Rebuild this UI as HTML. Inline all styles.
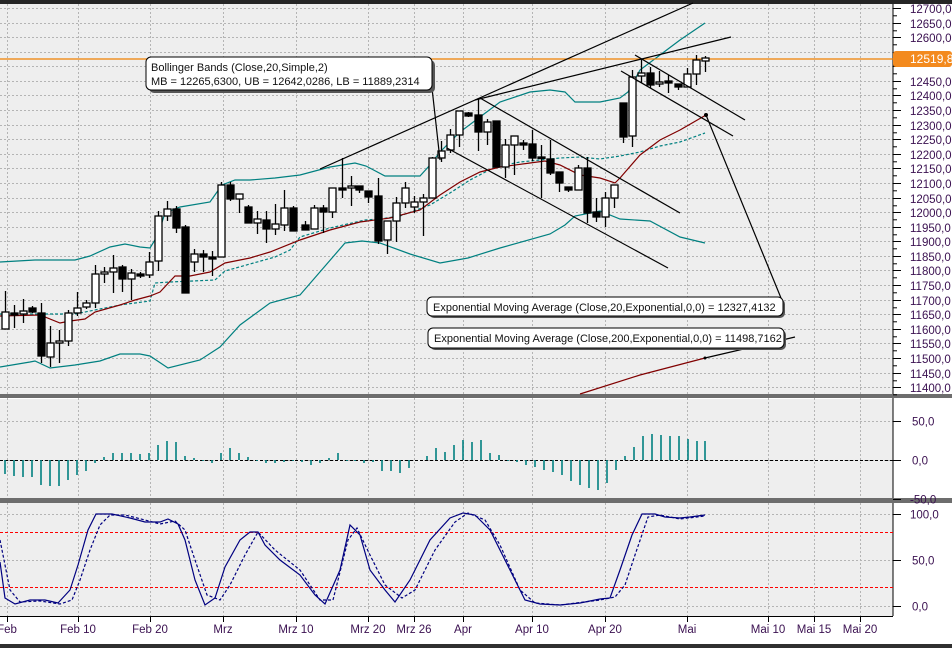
<!DOCTYPE html>
<html><head><meta charset="utf-8"><style>
html,body{margin:0;padding:0;background:#fff;width:952px;height:648px;overflow:hidden}
svg{display:block;font-family:"Liberation Sans",Arial,sans-serif}
</style></head><body>
<svg id="s" width="952" height="648" xmlns="http://www.w3.org/2000/svg">
<rect width="952" height="648" fill="#fff"/>
<rect x="0" y="0" width="893" height="394" fill="#eeeeee"/>
<rect x="0" y="399" width="893" height="99" fill="#eeeeee"/>
<rect x="0" y="503" width="893" height="113" fill="#eeeeee"/>
<g id="grid" stroke="#b4b4b4" stroke-width="1" stroke-dasharray="2,2"></g>
<rect x="0" y="0" width="952" height="4" fill="#252525"/>
<rect x="0" y="394" width="952" height="4" fill="#6d6d6d"/>
<rect x="0" y="498" width="952" height="5" fill="#6d6d6d"/>
<rect x="0" y="644" width="952" height="4" fill="#303030"/>
<line x1="893" y1="4" x2="893" y2="394" stroke="#000"/>
<line x1="893" y1="398" x2="893" y2="498" stroke="#000"/>
<line x1="893" y1="503" x2="893" y2="616" stroke="#000"/>
<line x1="0" y1="616.5" x2="893" y2="616.5" stroke="#000"/>
<g id="ticks" stroke="#000"></g>
<g id="labels" font-size="11.5" fill="#3a1050"></g>
<g id="ind"></g>
<line x1="0" y1="59" x2="893" y2="59" stroke="#f08000" stroke-width="1.3"/>
<g id="cand" stroke="#000" stroke-width="1.3"></g>
<g id="lines" fill="none" stroke="#000" stroke-width="1.2">
<line x1="320" y1="169" x2="693" y2="3"/>
<line x1="475" y1="100" x2="731" y2="37"/>
<line x1="480" y1="98" x2="680" y2="213"/>
<line x1="447" y1="148" x2="668" y2="268"/>
<line x1="635" y1="55" x2="745" y2="120"/>
<line x1="621" y1="71" x2="733" y2="136"/>
<line x1="432" y1="88" x2="440" y2="160"/>
<line x1="706" y1="115" x2="781" y2="298"/>
<line x1="705" y1="358" x2="795" y2="337"/>
</g>
<circle cx="706" cy="115" r="2" fill="#000"/>
<circle cx="705" cy="358" r="1.5" fill="#000"/>
<g font-size="11" fill="#111">
<rect x="149" y="60" width="286" height="33" rx="5" fill="#555"/>
<rect x="146" y="57" width="286" height="33" rx="5" fill="#fff" stroke="#000"/>
<text x="151" y="71">Bollinger Bands (Close,20,Simple,2)</text>
<text x="151" y="85">MB = 12265,6300, UB = 12642,0286, LB = 11889,2314</text>
<rect x="429" y="299" width="356" height="19" rx="5" fill="#555"/>
<rect x="427" y="297" width="356" height="19" rx="5" fill="#fff" stroke="#000"/>
<text x="433" y="311">Exponential Moving Average (Close,20,Exponential,0,0) = 12327,4132</text>
<rect x="430" y="330" width="356" height="20" rx="5" fill="#555"/>
<rect x="428" y="328" width="356" height="20" rx="5" fill="#fff" stroke="#000"/>
<text x="434" y="342">Exponential Moving Average (Close,200,Exponential,0,0) = 11498,7162</text>
</g>
<rect x="893" y="51" width="59" height="16" rx="3" fill="#f38a1e"/>
<text x="910" y="63" font-size="12" fill="#fff">12519,8</text>
</svg>
<script>
var NS="http://www.w3.org/2000/svg";
function el(p,t,a,txt){var e=document.createElementNS(NS,t);for(var k in a)e.setAttribute(k,a[k]);if(txt!=null)e.textContent=txt;document.getElementById(p).appendChild(e);return e;}
var py=function(p){return 8+(12700-p)/50*14.58};
var vx=[7,78,150,223,296,368,414,463,532,605,687,768,814,860];
vx.forEach(function(x){[[4,394],[398,498],[503,616]].forEach(function(r){el("grid","line",{x1:x+.5,y1:r[0],x2:x+.5,y2:r[1]});});});
for(var p=12700;p>=11400;p-=50){var y=Math.round(py(p))+.5;el("grid","line",{x1:0,y1:y,x2:893,y2:y});
 el("ticks","line",{x1:893,y1:y,x2:901,y2:y});
 el("ticks","line",{x1:893,y1:y+7.3,x2:897,y2:y+7.3});
 if(p!=12500&&p!=12550) el("labels","text",{x:910,y:y+4.5},p+",0");}
[[421,"50,0"],[460,"0,0"],[499,"-50,0"],[514,"100,0"],[560,"50,0"],[606,"0,0"]].forEach(function(a){el("ticks","line",{x1:893,y1:a[0]+.5,x2:901,y2:a[0]+.5});el("labels","text",{x:a[1].length>4?910:912,y:a[0]+4.5},a[1]);});
[421,460,514,560,606].forEach(function(y){el("grid","line",{x1:0,y1:y+.5,x2:893,y2:y+.5});});
[[7,"Feb"],[78,"Feb 10"],[150,"Feb 20"],[223,"Mrz"],[296,"Mrz 10"],[368,"Mrz 20"],[414,"Mrz 26"],[463,"Apr"],[532,"Apr 10"],[605,"Apr 20"],[687,"Mai"],[768,"Mai 10"],[814,"Mai 15"],[860,"Mai 20"]].forEach(function(a){
 el("ticks","line",{x1:a[0]+.5,y1:616,x2:a[0]+.5,y2:622});
 el("labels","text",{x:a[0],y:633,"text-anchor":"middle","font-size":"11.5"},a[1]);});
function pl(pts,st,w,da){var a={points:pts.map(function(q){return q.join(",")}).join(" "),fill:"none",stroke:st,"stroke-width":w};if(da)a["stroke-dasharray"]=da;el("ind","polyline",a);}
pl([[0,262],[35,260],[75,260],[90,256],[110,247],[125,244],[140,247],[150,248],[158,235],[165,213],[180,207],[210,202],[222,185],[235,180],[250,180],[275,178],[300,175],[330,167],[355,163],[366,166],[385,176],[420,176],[430,165],[440,152],[460,132],[480,117],[500,102],[530,92],[550,90],[565,92],[575,102],[600,102],[620,98],[628,92],[640,70],[660,55],[680,40],[705,23]],"#008080",1.2);
pl([[0,367],[30,362],[35,361],[50,368],[75,365],[100,361],[120,354],[140,354],[150,356],[168,368],[200,360],[220,347],[240,325],[270,303],[300,295],[345,243],[362,241],[380,243],[410,254],[440,263],[468,258],[500,248],[550,234],[565,225],[575,216],[600,211],[620,219],[650,221],[680,237],[705,243]],"#008080",1.2);
pl([[0,314],[40,314],[75,314],[80,313],[120,305],[150,301],[155,283],[170,282],[215,280],[225,271],[250,264],[275,257],[290,250],[300,237],[330,228],[365,220],[380,219],[400,216],[430,205],[450,193],[470,180],[495,167],[520,162],[540,160],[560,158],[580,157],[600,159],[620,156],[640,152],[660,146],[680,142],[705,133]],"#008080",1.2,"3,2");
pl([[0,316],[40,315],[60,323],[70,321],[85,319],[95,312],[120,305],[135,300],[150,296],[160,292],[175,276],[190,276],[210,272],[225,263],[250,258],[270,252],[300,240],[330,230],[360,222],[390,218],[420,210],[440,195],[460,182],[480,172],[500,167],[530,163],[545,161],[560,165],[580,175],[600,178],[615,183],[620,178],[640,155],[660,140],[680,130],[706,115]],"#800000",1.2);
pl([[580,394],[640,375],[705,358]],"#800000",1.2);
el("ind","line",{x1:0,y1:460.5,x2:893,y2:460.5,stroke:"#000","stroke-dasharray":"3,2"});
var mv=[[5,474],[14,476],[23,477],[32,477],[41,485],[50,486],[59,486],[68,480],[77,475],[86,471],[95,463],[104,457],[113,453],[122,453],[131,453],[140,454],[149,453],[158,445],[167,441],[176,442],[185,456],[194,458],[203,461],[212,463],[221,453],[230,448],[239,453],[248,457],[257,461],[266,463],[275,463],[284,462],[293,461],[302,462],[311,465],[320,463],[329,458],[338,453],[347,461],[355,461],[364,463],[373,462],[382,471],[391,471],[400,473],[409,468],[418,460],[427,456],[436,448],[445,452],[454,445],[463,440],[472,442],[481,440],[490,453],[499,455],[508,461],[517,462],[526,465],[535,467],[544,470],[553,472],[562,475],[571,481],[580,485],[589,488],[598,490],[607,483],[616,470],[625,456],[634,447],[643,436],[652,434],[661,435],[670,436],[679,436],[688,439],[697,441],[705,441]];
mv.forEach(function(m){el("ind","line",{x1:m[0],y1:460,x2:m[0],y2:m[1],stroke:"#008080","stroke-width":1.6});});
el("ind","line",{x1:0,y1:532.5,x2:893,y2:532.5,stroke:"#f00","stroke-dasharray":"3,2"});
el("ind","line",{x1:0,y1:587.5,x2:893,y2:587.5,stroke:"#f00","stroke-dasharray":"3,2"});
pl([[0,562],[5,598],[15,604],[30,600],[45,600],[58,603],[70,590],[78,565],[88,530],[96,514],[112,514],[130,518],[145,522],[160,522],[168,519],[178,524],[185,540],[195,580],[205,605],[215,598],[225,567],[240,540],[250,532],[258,532],[265,545],[280,560],[300,575],[315,595],[325,604],[340,570],[350,525],[360,535],[370,570],[385,590],[395,602],[410,580],[430,540],[450,518],[463,513],[475,515],[490,530],[510,570],[525,600],[540,604],[560,605],[580,603],[600,599],[610,598],[620,570],[632,535],[642,514],[655,514],[665,517],[680,518],[690,517],[705,515]],"#000080",1.2);
pl([[0,540],[10,590],[20,602],[40,601],[60,604],[72,600],[80,580],[90,550],[100,525],[110,515],[125,515],[145,520],[160,524],[175,521],[185,530],[195,560],[207,595],[220,600],[230,585],[245,555],[258,532],[275,550],[300,570],[320,600],[333,600],[348,540],[357,528],[370,555],[385,585],[402,598],[415,590],[435,550],[455,522],[468,513],[485,520],[500,545],[520,590],[535,603],[560,605],[600,600],[615,597],[625,585],[635,555],[648,517],[660,515],[680,519],[705,516]],"#000080",1.2,"3,2");
var C=[[5,312,329,1,291,329],[14,313,315,0,305,328],[23,311,314,1,299,323],[32,308,312,0,306,313],[41,313,356,0,303,363],[50,343,357,1,326,367],[59,341,343,1,330,363],[68,313,341,1,310,346],[77,308,313,1,292,316],[86,303,307,1,300,309],[95,274,303,1,265,308],[104,272,274,1,267,283],[113,268,272,1,255,293],[122,267,279,0,265,292],[131,273,279,1,269,300],[140,274,276,0,272,278],[149,262,275,1,252,278],[158,216,261,1,211,271],[167,209,216,1,201,221],[176,209,228,0,206,233],[185,227,293,0,225,293],[194,254,262,1,249,272],[203,254,257,0,250,272],[212,257,259,0,251,276],[221,185,257,1,182,257],[230,185,199,0,182,201],[239,194,199,1,194,213],[248,207,223,0,205,223],[257,219,223,1,211,234],[266,220,229,0,211,243],[275,224,229,1,204,235],[284,208,225,1,190,231],[293,208,231,0,206,231],[305,225,230,0,221,230],[314,208,229,1,205,229],[323,208,212,0,205,233],[332,188,212,1,188,218],[342,188,190,0,158,198],[351,186,188,1,176,206],[359,186,190,0,186,193],[368,191,197,0,191,203],[378,196,241,0,178,244],[387,221,240,1,221,254],[396,203,221,1,197,242],[405,188,203,1,182,208],[414,202,207,1,196,213],[423,198,202,1,194,236],[432,158,198,1,157,198],[441,151,158,1,141,162],[450,135,150,1,129,153],[459,111,135,1,111,147],[468,113,116,0,112,117],[478,115,132,0,98,151],[487,122,132,1,119,145],[496,121,167,0,121,167],[505,145,167,1,139,178],[514,136,145,1,136,175],[523,143,145,0,140,150],[532,144,158,0,130,161],[541,157,158,0,145,198],[550,159,173,0,140,175],[559,172,183,0,172,192],[568,187,190,0,187,192],[578,168,190,1,165,190],[587,168,213,0,157,223],[596,212,217,0,198,222],[605,198,217,1,192,227],[614,185,198,1,185,208],[623,103,137,0,103,143],[632,77,136,1,70,147],[641,73,76,1,59,83],[650,73,85,0,67,88],[659,82,84,1,71,87],[668,81,83,0,75,93],[678,84,87,0,84,90],[687,74,87,1,68,87],[696,60,74,1,55,85],[705,58,61,1,56,72]];
C.forEach(function(c){el("cand","line",{x1:c[0]+.5,y1:c[4],x2:c[0]+.5,y2:c[5]});
 var h=Math.max(c[2]-c[1],1.5);el("cand","rect",{x:c[0]-3,y:c[1],width:7,height:h,fill:c[3]?"#fff":"#000"});});
</script>
</body></html>
